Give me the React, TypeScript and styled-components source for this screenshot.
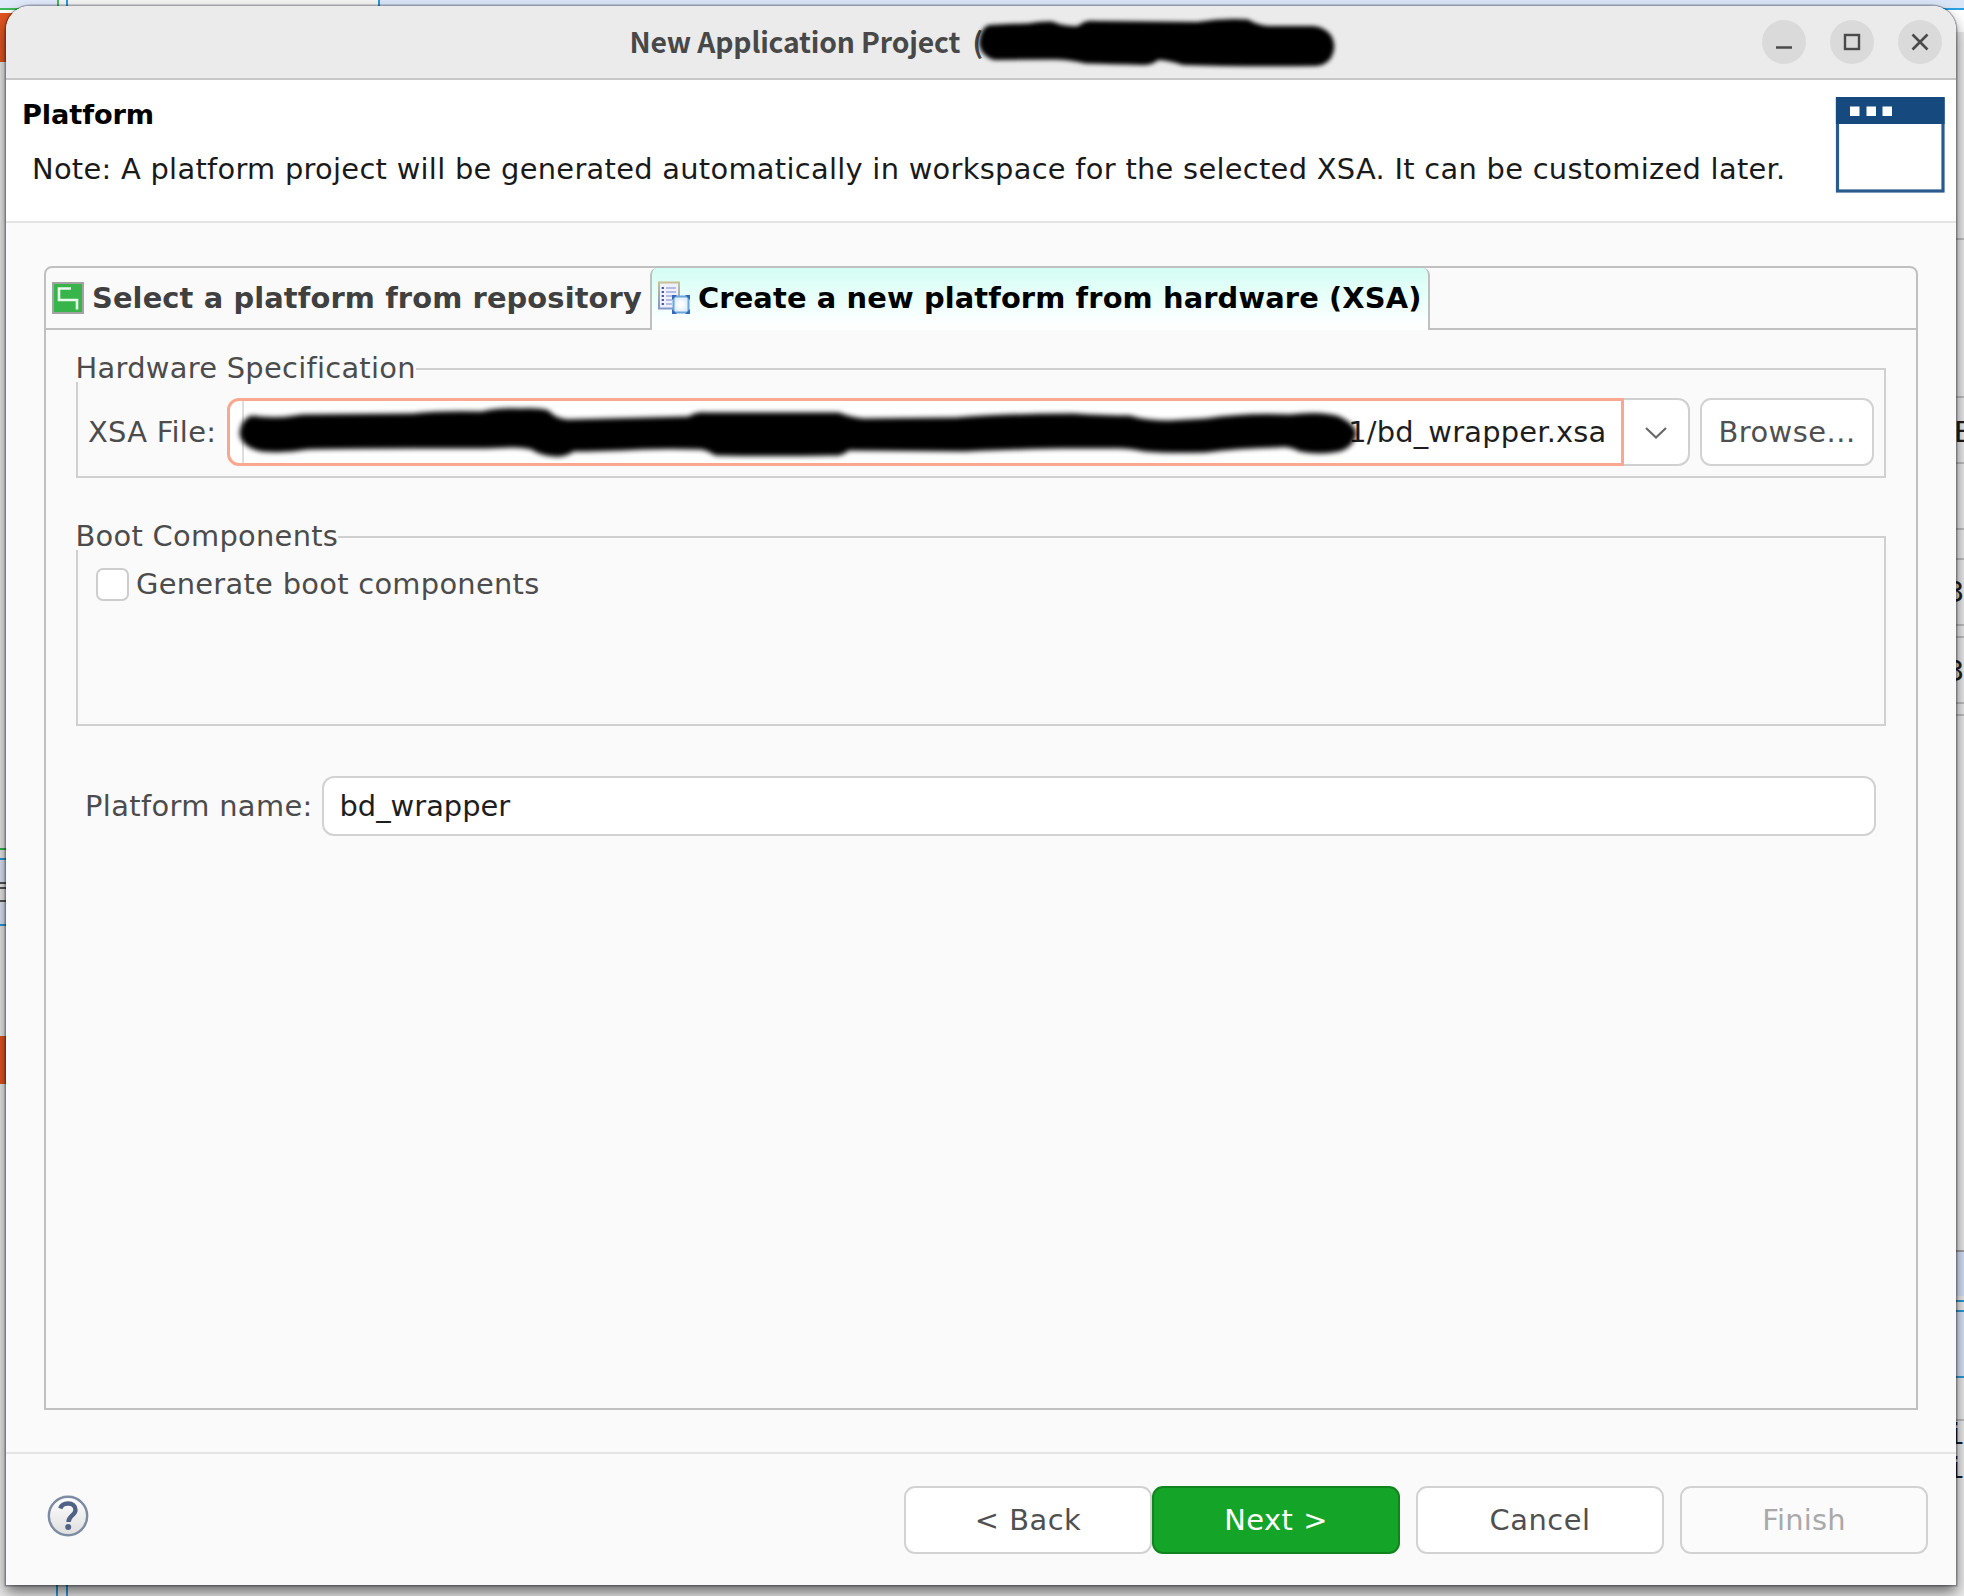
import React from 'react';
import styled, { createGlobalStyle, css } from 'styled-components';

const GlobalStyle = createGlobalStyle`
  *, *::before, *::after { box-sizing: border-box; }
  html, body { margin: 0; padding: 0; overflow: hidden; }
  body, button, input { font-family: 'DejaVu Sans', sans-serif; font-size: 28.9px; letter-spacing: 0.28px; }
`;

const Desktop = styled.div`
  position: relative;
  width: 1964px;
  height: 1596px;
  overflow: hidden;
  background: #e9e9e9;
`;

/* Fragments of the application that stays visible behind the dialog. */
const Fragment = styled.div<{ $x: number; $y: number; $w: number; $h: number; $fill: string }>`
  position: absolute;
  left: ${p => p.$x}px;
  top: ${p => p.$y}px;
  width: ${p => p.$w}px;
  height: ${p => p.$h}px;
  background: ${p => p.$fill};
`;

const HiddenLabel = styled.span<{ $x: number; $y: number; $mono?: boolean }>`
  position: absolute;
  left: ${p => p.$x}px;
  top: ${p => p.$y}px;
  line-height: 34px;
  color: #1c1c1c;
  white-space: nowrap;
  ${p => p.$mono && css`font-family: 'DejaVu Sans Mono', monospace;`}
`;

const Dialog = styled.section`
  position: absolute;
  left: 6px;
  top: 6px;
  width: 1950px;
  height: 1579px;
  display: flex;
  flex-direction: column;
  overflow: hidden;
  border-radius: 24px 24px 0 0;
  background: #fafafa;
  color: #4c4c4c;
`;

const DialogShadow = styled.div`
  position: absolute;
  left: 6px;
  top: 6px;
  width: 1950px;
  height: 1579px;
  border-radius: 24px 24px 0 0;
  box-shadow: 0 0 0 1.5px rgba(0, 0, 20, 0.28), 0 7px 14px rgba(0, 0, 0, 0.55);
`;

const TitleBar = styled.header`
  flex: none;
  height: 74px;
  display: grid;
  grid-template-columns: 1fr 703px 1fr;
  align-items: center;
  background: #ebebeb;
  border-bottom: 2px solid #c6c6c6;
`;

const Title = styled.h1`
  position: relative;
  grid-column: 2;
  margin: 0 0 3px;
  line-height: 40px;
  font-family: 'Noto Sans CJK SC', 'Noto Sans', sans-serif;
  font-size: 28.3px;
  font-weight: 700;
  letter-spacing: -0.15px;
  white-space: pre;
  color: #484848;
`;

const Paren = styled.span`
  margin-left: 6px;
`;

const TitleScribble = styled.svg`
  position: absolute;
  left: 341.5px;
  top: -15px;
  overflow: visible;
`;

const WindowControls = styled.div`
  display: flex;
  justify-content: flex-end;
  gap: 24px;
  padding-right: 14px;
`;

const WindowControl = styled.button`
  display: grid;
  place-items: center;
  width: 44px;
  height: 44px;
  padding: 0;
  border: 0;
  border-radius: 50%;
  background: #dadada;
`;

const Banner = styled.div`
  flex: none;
  height: 143px;
  display: flex;
  justify-content: space-between;
  padding: 16px 11px 0 16px;
  background: #fff;
  border-bottom: 2px solid #e4e4e4;
`;

const BannerText = styled.div`
  color: #1a1a1a;
  white-space: nowrap;
`;

const BannerTitle = styled.h2`
  margin: 0;
  line-height: 37px;
  font-size: 27.2px;
  letter-spacing: -0.1px;
  color: #000;
`;

const BannerNote = styled.p`
  margin: 18px 0 0 10px;
  line-height: 36px;
  letter-spacing: 0.28px;
`;

const Body = styled.main`
  flex: none;
  height: 1229px;
  padding: 43px 38px 42px;
`;

const TabFolder = styled.div`
  height: 1144px;
  display: flex;
  flex-direction: column;
  border: 2px solid #c0c0c0;
  border-radius: 8px 8px 0 0;
`;

const TabStrip = styled.div`
  flex: none;
  display: flex;
  height: 62px;
`;

const Tab = styled.div<{ $width: number; $active?: boolean }>`
  display: flex;
  align-items: center;
  gap: 8px;
  flex: none;
  width: ${p => p.$width}px;
  padding: 0 0 0 6px;
  border-bottom: 2px solid #c0c0c0;
  font-weight: 700;
  letter-spacing: 0.11px;
  white-space: nowrap;
  color: #404040;
  ${p => p.$active && css`
    padding-bottom: 2px;
    border: 2px solid #c0c0c0;
    border-width: 0 2px;
    border-radius: 7px 7px 0 0;
    background: linear-gradient(#d3fdf4, #e6fff9 40%, #fdffff 90%);
    color: #000;
  `}
`;

const TabFiller = styled.div`
  flex: 1;
  border-bottom: 2px solid #c0c0c0;
`;

const TabPage = styled.div`
  display: flex;
  flex-direction: column;
  padding: 38px 30px 0;
`;

const Group = styled.div<{ $height: number }>`
  height: ${p => p.$height}px;
  border: 2px solid #d0d0d0;
  & + & { margin-top: 58px; }
`;

const Legend = styled.div`
  width: fit-content;
  height: 30px;
  margin: -18px 0 -12px -2.5px;
  line-height: 32.5px;
  background: #fafafa;
`;

const FileRow = styled.div`
  display: flex;
  align-items: stretch;
  height: 68px;
  margin: 28px 10px 0 0;
`;

const FileLabel = styled.label`
  width: 149px;
  padding-left: 10px;
  line-height: 69.5px;
  white-space: nowrap;
`;

const FileField = styled.div`
  position: relative;
  display: flex;
  justify-content: flex-end;
  width: 1397px;
  padding-right: 14.5px;
  border: 3.5px solid #f9a88f;
  border-radius: 12px 0 0 12px;
  background: linear-gradient(90deg, transparent 12px, #dedede 12px, #dedede 13.5px, transparent 13.5px) #fff;
  line-height: 63px;
  letter-spacing: 0.2px;
  color: #1e1e1e;
`;

const FieldScribble = styled.svg`
  position: absolute;
  left: 9px;
  top: -3px;
  overflow: visible;
`;

const DropButton = styled.button`
  display: grid;
  place-items: center;
  width: 66px;
  padding: 2px 0 0 0;
  border: 2px solid #d0d0d0;
  border-left: 0;
  border-radius: 0 12px 12px 0;
  background: #fff;
`;

const Button = styled.button<{ $width: number; $tone?: 'primary' | 'disabled' }>`
  width: ${p => p.$width}px;
  height: 68px;
  padding: 0;
  border: 2px solid #d2d2d2;
  border-radius: 11px;
  background: #fff;
  color: #505050;
  letter-spacing: 0.5px;
  ${p => p.$tone === 'primary' && css`
    border-color: #11831f;
    background: #14a528;
    color: #fff;
  `}
  ${p => p.$tone === 'disabled' && css`
    background: #fbfbfb;
    color: #a9a9a9;
    letter-spacing: 0.2px;
  `}
`;

const BrowseButton = styled(Button)`
  margin-left: 10px;
`;

const CheckRow = styled.label`
  display: flex;
  align-items: center;
  gap: 7px;
  height: 34px;
  margin: 29px 0 0 18px;
`;

const CheckBox = styled.input`
  appearance: none;
  width: 33px;
  height: 33px;
  margin: 0;
  border: 2px solid #cdcdcd;
  border-radius: 7px;
  background: #fff;
`;

const NameRow = styled.label`
  display: flex;
  align-items: center;
  height: 60px;
  margin: 50px 10px 0 9px;
`;

const NameLabel = styled.span`
  width: 237px;
  letter-spacing: 0.35px;
  white-space: nowrap;
`;

const NameInput = styled.input`
  flex: 1;
  height: 60px;
  padding: 0 15.5px;
  border: 2px solid #d2d2d2;
  border-radius: 12px;
  background: #fff;
  color: #1e1e1e;
  letter-spacing: 0;
`;

const Footer = styled.footer`
  flex: 1;
  display: flex;
  align-items: flex-start;
  justify-content: space-between;
  padding: 32px 28px 0 41px;
  border-top: 2px solid #e4e4e4;
`;

const HelpIcon = styled.svg`
  margin-top: 9px;
`;

const Actions = styled.div`
  display: flex;
  gap: 16px;
`;

const Pager = styled.div`
  display: flex;
`;

const fragments: [number, number, number, number, string][] = [
  [0, 0, 57, 8, '#dfe9fa'],
  [57, 0, 2, 8, '#3fbb5a'],
  [59, 0, 319, 8, '#f4f4f4'],
  [66, 0, 2, 8, '#2a98d4'],
  [378, 0, 2, 8, '#2a98d4'],
  [380, 0, 1584, 8, '#dae6f7'],
  [0, 8, 20, 2, '#3fbb5a'],
  [0, 10, 20, 3, '#ffffff'],
  [0, 13, 14, 49, '#e0541f'],
  [1935, 8, 29, 2, '#2aa0e4'],
  [1940, 10, 24, 22, '#ffffff'],
  [0, 848, 6, 2, '#35b350'],
  [0, 858, 6, 2, '#2a98d4'],
  [0, 861, 6, 21, '#dce6f8'],
  [0, 882, 6, 2, '#555555'],
  [0, 887, 6, 2, '#555555'],
  [0, 900, 6, 2, '#555555'],
  [0, 903, 6, 21, '#dce6f8'],
  [0, 924, 6, 2, '#2a98d4'],
  [0, 1036, 6, 48, '#e0541f'],
  [56, 1585, 2, 11, '#2a98d4'],
  [66, 1585, 2, 11, '#2a98d4'],
  [1956, 1250, 8, 2, '#a0a0a0'],
  [1956, 1252, 8, 44, '#d3e0f6'],
  [1956, 1300, 8, 2, '#2a98d4'],
  [1956, 1310, 8, 2, '#2a98d4'],
  [1956, 1312, 8, 64, '#d8e3f7'],
  [1956, 1376, 8, 2, '#2a98d4'],
  [1956, 1419, 8, 2, '#bdbdbd'],
];

const ruledLines = [238, 396, 462, 528, 558, 624, 636, 702, 714];

const TITLE_SCRIBBLE =
  'M988 25 Q1010 24 1027 23.5 Q1040 21 1051 21.5 Q1064 27 1077 26 Q1084 20 1094 21 L1196 22 Q1222 18 1247 19.5 Q1258 26 1268 26 L1312 26 Q1325 27 1331 37 Q1336 48 1330 58 Q1325 65 1315 66 Q1240 67 1182 65 Q1166 60 1157 60 Q1152 65 1142 65 Q1110 64 1085 63.5 Q1065 59 1051 59.5 L993 60 Q980 56 978 44 Q979 28 988 25 Z';

const FIELD_SCRIBBLE =
  'M252 416 Q275 420 303 415 L413 414 Q440 411 482 412 Q500 408 520 409 Q540 408 549 411 Q556 419 568 420 L689 417 Q698 412 706 413 L839 413 Q852 418 864 419 L956 418 Q1007 414 1074 414 Q1105 416 1130 416 Q1146 421 1170 421 L1206 419 Q1245 413 1290 415 Q1322 411 1340 417 Q1356 425 1357 434 Q1354 448 1340 452 Q1320 456 1300 452 Q1289 446 1278 448 Q1235 449 1206 453 Q1165 454 1145 452 Q1130 449 1120 449 L1063 449 Q1010 450 966 452 L849 451 Q843 457 834 456 Q770 457 716 456 Q706 450 701 450 Q670 449 643 450 Q600 452 574 452 Q566 458 555 457 Q540 456 532 450 Q523 448 513 448 L487 449 L413 449 Q340 449 308 450 Q285 454 262 452 Q242 448 240 434 Q241 420 252 416 Z';

function Backdrop() {
  return (
    <>
      {fragments.map(([x, y, w, h, fill], i) => (
        <Fragment key={i} $x={x} $y={y} $w={w} $h={h} $fill={fill} />
      ))}
      {ruledLines.map(y => (
        <Fragment key={y} $x={1956} $y={y} $w={8} $h={2} $fill="#bdbdbd" />
      ))}
      <HiddenLabel $x={1954} $y={415}>E</HiddenLabel>
      <HiddenLabel $x={1946} $y={575}>3</HiddenLabel>
      <HiddenLabel $x={1946} $y={654}>3</HiddenLabel>
      <HiddenLabel $x={1947} $y={1417} $mono>i</HiddenLabel>
      <HiddenLabel $x={1947} $y={1451} $mono>i</HiddenLabel>
    </>
  );
}

function RepositoryIcon() {
  return (
    <svg width="32" height="32" viewBox="0 0 32 32">
      <rect x="1" y="1" width="30" height="30" fill="#38b54a" stroke="#a3a3a3" strokeWidth="2" />
      <path d="M19 6.5H7V18H25V27.5" fill="none" stroke="#e9f9eb" strokeWidth="2.6" />
    </svg>
  );
}

function HardwareIcon() {
  return (
    <svg width="32" height="34" viewBox="0 0 32 34">
      <defs>
        <linearGradient id="sheet" x2="0" y2="1">
          <stop offset="0" stopColor="#c9c092" />
          <stop offset="1" stopColor="#8496cc" />
        </linearGradient>
        <radialGradient id="glow">
          <stop offset="0.2" stopColor="#fff" />
          <stop offset="1" stopColor="#dcebfa" />
        </radialGradient>
      </defs>
      <rect x="1" y="1.500" width="20" height="26" fill="#eef1fb" stroke="url(#sheet)" strokeWidth="2" />
      <g stroke="#a3abd6" strokeWidth="1.4">
        <path d="M8 7h10M8 11h10M8 15h10M8 19h6M8 23h6" />
      </g>
      <path d="M4.800 6v19" stroke="#4556a0" strokeWidth="2.200" strokeDasharray="2 2" />
      <rect x="15.500" y="15.500" width="15" height="16" fill="url(#glow)" stroke="#6ba6d8" strokeWidth="2" />
      <g fill="#3468b8">
        <path d="M14 14h5l-5 5zM32 14h-5l5 5zM14 33h5l-5-5zM32 33h-5l5-5z" />
      </g>
    </svg>
  );
}

export default function App() {
  return (
    <>
      <GlobalStyle />
      <Desktop>
        <Backdrop />
        <DialogShadow />
        <Dialog>
          <TitleBar>
            <Title>
              New Application Project <Paren>(</Paren>
              <TitleScribble width="366" height="72" viewBox="970 6 366 72">
                <filter id="softTitle"><feGaussianBlur stdDeviation="2.2" /></filter>
                <path d={TITLE_SCRIBBLE} fill="#000" filter="url(#softTitle)" />
              </TitleScribble>
            </Title>
            <WindowControls>
              <WindowControl aria-label="Minimize">
                <svg width="18" height="18"><path d="M1 14.500h16" stroke="#4a4a4a" strokeWidth="2.4" /></svg>
              </WindowControl>
              <WindowControl aria-label="Maximize">
                <svg width="18" height="18"><rect x="2" y="2" width="14" height="14" fill="none" stroke="#4a4a4a" strokeWidth="2.4" /></svg>
              </WindowControl>
              <WindowControl aria-label="Close">
                <svg width="18" height="18"><path d="M1.500 1.500l15 15M16.500 1.500l-15 15" stroke="#4a4a4a" strokeWidth="2.6" /></svg>
              </WindowControl>
            </WindowControls>
          </TitleBar>

          <Banner>
            <BannerText>
              <BannerTitle>Platform</BannerTitle>
              <BannerNote>
                Note: A platform project will be generated automatically in workspace for the selected XSA. It can be customized later.
              </BannerNote>
            </BannerText>
            <svg width="110" height="98" viewBox="0 0 110 98">
              <rect x="2.500" y="3" width="105.500" height="92" fill="#fff" stroke="#2a5b8c" strokeWidth="3.200" />
              <rect x="0.900" y="1" width="108.700" height="27" fill="#164a7e" />
              <path d="M15 10.500h9.500v9.500h-9.500zM31.500 10.500h9.500v9.500h-9.500zM47.500 10.500h9.500v9.500h-9.500z" fill="#fff" />
            </svg>
          </Banner>

          <Body>
            <TabFolder>
              <TabStrip>
                <Tab $width={604}>
                  <RepositoryIcon />
                  Select a platform from repository
                </Tab>
                <Tab $width={780} $active>
                  <HardwareIcon />
                  Create a new platform from hardware (XSA)
                </Tab>
                <TabFiller />
              </TabStrip>
              <TabPage>
                <Group $height={110}>
                  <Legend>Hardware Specification</Legend>
                  <FileRow>
                    <FileLabel>XSA File:</FileLabel>
                    <FileField>
                      1/bd_wrapper.xsa
                      <FieldScribble width="1120" height="61" viewBox="239.500 398.500 1120 61">
                        <filter id="softField"><feGaussianBlur stdDeviation="2.8" /></filter>
                        <path d={FIELD_SCRIBBLE} fill="#000" filter="url(#softField)" />
                      </FieldScribble>
                    </FileField>
                    <DropButton aria-label="Show history">
                      <svg width="22" height="12"><path d="M1 1l10 9.500L21 1" fill="none" stroke="#696969" strokeWidth="2.200" /></svg>
                    </DropButton>
                    <BrowseButton $width={174}>Browse...</BrowseButton>
                  </FileRow>
                </Group>
                <Group $height={190}>
                  <Legend>Boot Components</Legend>
                  <CheckRow>
                    <CheckBox type="checkbox" />
                    Generate boot components
                  </CheckRow>
                </Group>
                <NameRow>
                  <NameLabel>Platform name:</NameLabel>
                  <NameInput defaultValue="bd_wrapper" />
                </NameRow>
              </TabPage>
            </TabFolder>
          </Body>

          <Footer>
            <HelpIcon width="42" height="42" viewBox="0 0 42 42">
              <defs>
                <linearGradient id="help" x2="0" y2="1">
                  <stop offset="0" stopColor="#fff" />
                  <stop offset="1" stopColor="#dedede" />
                </linearGradient>
              </defs>
              <circle cx="21" cy="21" r="19.200" fill="url(#help)" stroke="#7d8ba3" strokeWidth="2.400" />
              <path d="M13.300 13.500C14.500 9.500 18 8.500 21 8.500C25.500 8.500 28.500 11 28.500 15C28.500 20.500 21.500 20.500 21.500 27" fill="none" stroke="#506285" strokeWidth="4.400" />
              <circle cx="21.200" cy="32" r="3" fill="#506285" />
            </HelpIcon>
            <Actions>
              <Pager>
                <Button $width={248}>&lt; Back</Button>
                <Button $width={248} $tone="primary">Next &gt;</Button>
              </Pager>
              <Button $width={248}>Cancel</Button>
              <Button $width={248} $tone="disabled" disabled>Finish</Button>
            </Actions>
          </Footer>
        </Dialog>
      </Desktop>
    </>
  );
}
